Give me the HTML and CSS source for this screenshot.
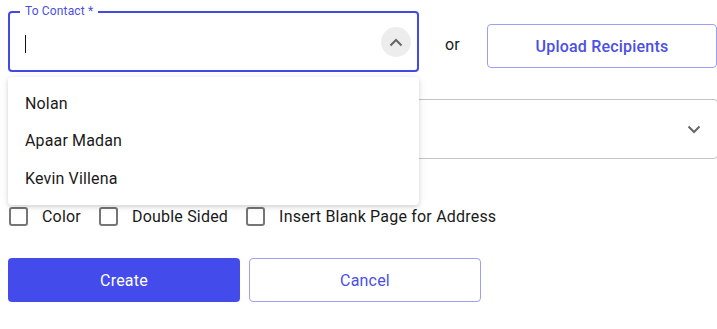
FILE: index.html
```html
<!DOCTYPE html>
<html>
<head>
<meta charset="utf-8">
<link rel="stylesheet" href="styles.css">
</head>
<body>
<div class="form">
  <div class="row-top">
    <div class="field">
      <span class="field-label">To Contact *</span>
      <span class="caret"></span>
      <span class="toggle">
        <svg width="14" height="9" viewBox="0 0 14 9"><path d="M1.5 7.5 L7 2 L12.5 7.5" fill="none" stroke="#666" stroke-width="2"/></svg>
      </span>
      <div class="menu">
        <div class="menu-item">Nolan</div>
        <div class="menu-item">Apaar Madan</div>
        <div class="menu-item">Kevin Villena</div>
      </div>
    </div>
    <span class="or">or</span>
    <button class="btn-upload">Upload Recipients</button>
  </div>
  <div class="select">
    <svg width="14" height="9" viewBox="0 0 14 9"><path d="M1.5 1.5 L7 7 L12.5 1.5" fill="none" stroke="#666" stroke-width="2"/></svg>
  </div>
  <div class="checks">
    <label class="check"><span class="box"></span>Color</label>
    <label class="check"><span class="box"></span>Double Sided</label>
    <label class="check"><span class="box"></span>Insert Blank Page for Address</label>
  </div>
  <div class="actions">
    <button class="btn-primary">Create</button>
    <button class="btn-outline">Cancel</button>
  </div>
</div>
</body>
</html>
```
FILE: styles.css
```css
html, body {
  margin: 0;
  padding: 0;
  background: #fff;
  font-family: Roboto, "Liberation Sans", sans-serif;
  color: #1a1a1a;
  letter-spacing: 0.15px;
  overflow: hidden;
}
.form {
  padding: 11px 0 0 8px;
  width: 710px;
}
.row-top {
  display: flex;
  align-items: flex-start;
  height: 61px;
}
.field {
  position: relative;
  box-sizing: border-box;
  width: 411px;
  height: 61px;
  border: 2px solid #4449e6;
  border-radius: 4px;
  flex-shrink: 0;
}
.field-label {
  position: absolute;
  top: -9px;
  left: 10px;
  padding: 0 5px;
  background: #fff;
  font-size: 12px;
  line-height: 14px;
  color: #4a4fe6;
}
.caret {
  position: absolute;
  left: 15px;
  top: 22px;
  width: 1px;
  height: 18px;
  background: #111;
}
.toggle {
  position: absolute;
  right: 6px;
  top: 14px;
  width: 30px;
  height: 30px;
  border-radius: 50%;
  background: #ededed;
  display: flex;
  align-items: center;
  justify-content: center;
}
.menu {
  position: absolute;
  left: -2px;
  top: 64px;
  width: 411px;
  box-sizing: border-box;
  padding: 8px 0;
  background: #fff;
  border-radius: 4px;
  box-shadow: 0 2px 4px rgba(0,0,0,0.12), 0 1px 10px rgba(0,0,0,0.08);
  z-index: 5;
}
.menu-item {
  height: 37.3px;
  line-height: 37.3px;
  padding-left: 17px;
  font-size: 16px;
  color: #1a1a1a;
}
.or {
  margin-left: 26px;
  margin-top: 13px;
  line-height: 42px;
  font-size: 16px;
  color: #1a1a1a;
  width: 42px;
}
.btn-upload {
  box-sizing: border-box;
  width: 230px;
  height: 44px;
  margin-top: 13px;
  border: 1px solid #9c9ff4;
  border-radius: 4px;
  background: #fff;
  font-family: Roboto, "Liberation Sans", sans-serif;
  font-size: 16px;
  font-weight: 500;
  letter-spacing: 0.2px;
  color: #4a4fe6;
}
.select {
  box-sizing: border-box;
  margin-top: 27px;
  height: 60px;
  border: 1px solid #c4c4c4;
  border-radius: 4px;
  display: flex;
  align-items: center;
  justify-content: flex-end;
  padding-right: 16px;
}
.checks {
  display: flex;
  align-items: center;
  margin-top: 47px;
  height: 20px;
  gap: 17px;
}
.check {
  display: flex;
  align-items: center;
  font-size: 16px;
  letter-spacing: 0.2px;
  color: #1a1a1a;
}
.box {
  box-sizing: border-box;
  width: 19px;
  height: 19px;
  border: 2px solid #767676;
  border-radius: 3px;
  margin-left: 1px;
  margin-right: 14px;
}
.actions {
  display: flex;
  gap: 9px;
  margin-top: 32px;
}
.actions button {
  box-sizing: border-box;
  width: 232px;
  height: 44px;
  border-radius: 4px;
  font-family: Roboto, "Liberation Sans", sans-serif;
  font-size: 16px;
  letter-spacing: 0.2px;
}
.btn-primary {
  border: none;
  background: #444beb;
  color: #fff;
}
.btn-outline {
  border: 1px solid #9c9ff4;
  background: #fff;
  color: #4a4fe6;
}
```
